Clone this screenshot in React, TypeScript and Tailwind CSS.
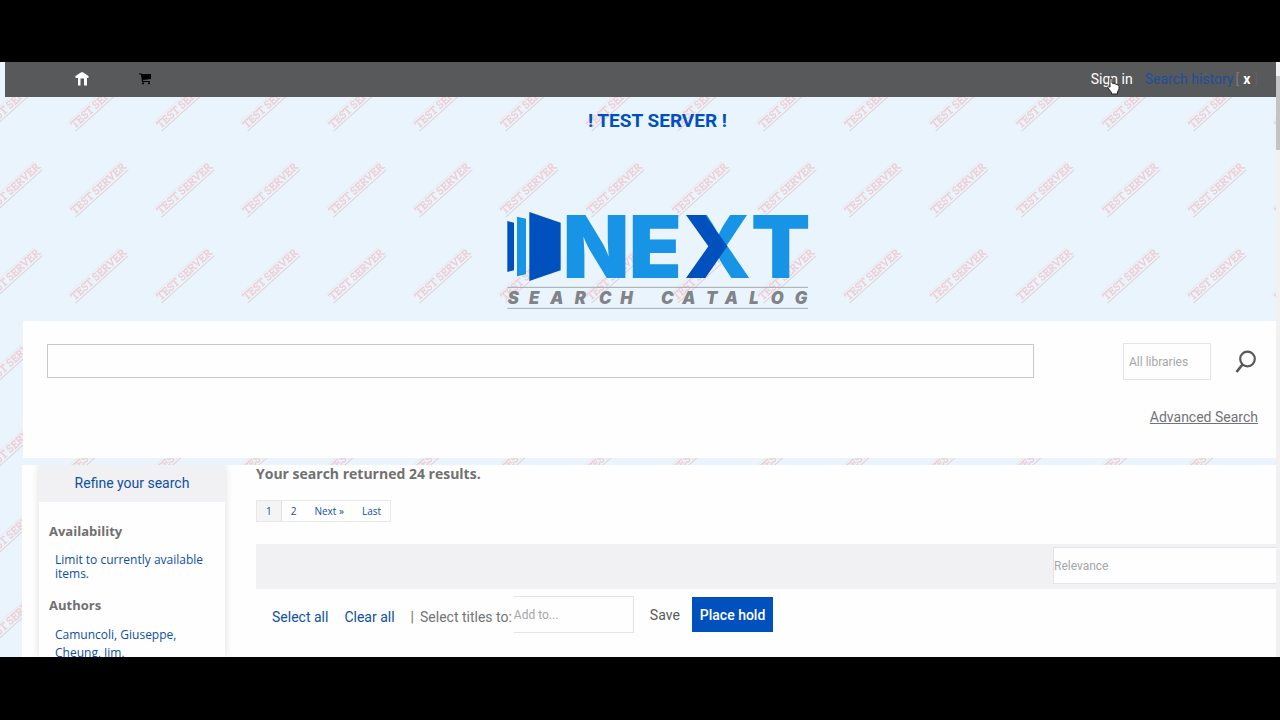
import React from "react";

const roboto = "font-['Roboto',sans-serif]";

function Watermark() {
  return (
    <svg aria-hidden="true" className="pointer-events-none absolute inset-0 h-full w-full">
      <defs>
        <pattern id="stamp" x="-20" y="3" width="86" height="86" patternUnits="userSpaceOnUse">
          <g transform="translate(10 65) rotate(-42)">
            <text
              x="0"
              y="-2"
              fontFamily="Liberation Serif, serif"
              fontSize="11"
              fill="#f3dde4"
              stroke="#ecc9d1"
              strokeWidth="0.5"
            >
              TEST SERVER
            </text>
            <path d="M-1 0.5H70" stroke="#e2d0d8" strokeWidth="1" />
            <path d="M-1 -11H69" stroke="#ecdfe6" strokeWidth="0.7" />
          </g>
        </pattern>
      </defs>
      <rect width="100%" height="100%" fill="url(#stamp)" />
    </svg>
  );
}

function HomeIcon() {
  return (
    <svg width="14" height="14" viewBox="0 0 14 14" fill="#fff" aria-hidden="true">
      <path d="M7 0 L9 1 L13.5 4 V6 H12 V13.5 H9 V6.5 H5.5 V13.5 H3 V6 H0.5 V4 L5 1Z" />
    </svg>
  );
}

function CartIcon() {
  return (
    <svg width="13" height="12" viewBox="0 0 13 12" fill="#000" aria-hidden="true">
      <path d="M0 0.5H2.5L3 1H12V6L4 7V8H11V9H3L2 1.5H0Z" />
      <circle cx="4" cy="10.3" r="1.1" />
      <circle cx="10" cy="10.3" r="1.1" />
    </svg>
  );
}

function HandCursor() {
  return (
    <svg
      width="13"
      height="18"
      viewBox="0 0 13 18"
      aria-hidden="true"
      className="pointer-events-none absolute left-4 top-2"
    >
      <path
        d="M3 1.5Q4 .5 5 1.5V6L6 6.2L8 6.8L10 7.5Q12 8 12 9.5V12L10.5 15V17H4.5V15.5L1 11Q.2 9.5 1.5 9.2L3 10.2Z"
        fill="#fff"
        stroke="#222"
        strokeWidth="1"
      />
    </svg>
  );
}

function Logo() {
  return (
    <svg width="302" height="99" viewBox="81 363 906 297" role="img" aria-label="NEXT Search Catalog">
      <path d="M82 393L102 398V541L82 546Z" fill="#0050bd" />
      <path d="M111 380L138 386V553L111 559Z" fill="#1794e6" />
      <path d="M148 366L242 398V541L148 573Z" fill="#0050bd" />
      <text y="564" fontFamily="Inter, sans-serif" fontWeight="900" fontSize="260" fill="#1794e6">
        <tspan x="248 446">NE</tspan>
        <tspan x="616" fontWeight="800">X</tspan>
        <tspan x="813">T</tspan>
      </text>
      <path d="M618 375H676L742 469L676 564H618L685 469Z" fill="#0050bd" />
      <path d="M82 592H984M82 655H984" stroke="#a5a9ad" strokeWidth="3" />
      <text
        x="83 147 211 284 357 421 503 543 607 678 734 808 872 944"
        y="642"
        fontFamily="Inter, sans-serif"
        fontWeight="900"
        fontStyle="italic"
        fontSize="50"
        fill="#808388"
      >
        SEARCH CATALOG
      </text>
    </svg>
  );
}

function TopBar() {
  return (
    <header className={`ml-[5px] flex h-[35px] items-center bg-[#58595b] pb-[2px] text-sm ${roboto}`}>
      <nav aria-label="Shortcuts" className="flex items-center gap-[50px] pl-[70px]">
        <a href="#home" aria-label="Home"><HomeIcon /></a>
        <a href="#cart" aria-label="Cart"><CartIcon /></a>
      </nav>
      <div className="ml-auto flex items-center pr-[18px]">
        <a href="#signin" className="relative mr-3 text-white">
          Sign in
          <HandCursor />
        </a>
        <a href="#history" className="text-[#1b509c]">Search history</a>
        <span className="ml-0.5 flex gap-1 text-[#85777b]">
          [
          <a href="#clear" aria-label="Clear search history" className="font-bold text-white">x</a>
          <span className="text-[#70595d]">]</span>
        </span>
      </div>
    </header>
  );
}

function SearchArea() {
  return (
    <form className={`ml-[23px] h-[137px] bg-[#fefefe] pl-6 pr-[18px] pt-[22px] ${roboto}`}>
      <div className="flex items-start">
        <input
          type="text"
          aria-label="Search the catalog"
          className="mt-px h-[34px] min-w-0 flex-1 border border-[#c8c8cb] bg-[#fefefe] px-2 outline-none"
        />
        <select
          aria-label="Library"
          className="ml-[89px] h-[37px] w-[88px] appearance-none rounded-none border border-[#e4e4e8] bg-[#fefefe] px-[5px] text-xs text-[#a5a6a9]"
        >
          <option>All libraries</option>
        </select>
        <button type="button" aria-label="Search" className="mt-[7px] ml-6 mr-px">
          <svg width="22" height="24" viewBox="0 0 22 24" fill="none" stroke="#58595b" strokeWidth="2.2">
            <circle cx="12.5" cy="9" r="7.3" />
            <path d="M7.5 14.5L1.5 22" strokeWidth="2.8" />
          </svg>
        </button>
      </div>
      <div className="mt-[25px] text-right">
        <a href="#advanced" className="text-sm text-[#727377] underline">Advanced Search</a>
      </div>
    </form>
  );
}

function Facets() {
  return (
    <aside className="w-[186px] shrink-0 bg-[#fefefe] text-xs text-[#0f4fa5] shadow-[0_0_8px_rgba(0,0,30,0.13)]">
      <h2 className={`flex h-[37px] items-center justify-center bg-[#f1f1f4] pb-px text-sm ${roboto}`}>
        <a href="#refine">Refine your search</a>
      </h2>
      <div className="px-[10px] pt-5">
        <h3 className="text-[13px] leading-[18px] font-bold text-[#707070]">Availability</h3>
        <ul className="px-[6px] pt-[13px]">
          <li className="leading-[14px]"><a href="#available">Limit to currently available items.</a></li>
        </ul>
        <h3 className="pt-[15px] text-[13px] leading-[18px] font-bold text-[#707070]">Authors</h3>
        <ul className="px-[6px] pt-3 leading-[18px]">
          <li><a href="#camuncoli">Camuncoli, Giuseppe,</a></li>
          <li><a href="#cheung">Cheung, Jim,</a></li>
        </ul>
      </div>
    </aside>
  );
}

function Pagination() {
  return (
    <nav aria-label="Pages" className="mt-[18px] flex w-fit border border-[#e8e8ea] text-[10px] leading-5 text-[#0f4fa5]">
      <a href="#p1" aria-current="page" className="border-r border-[#e0e0e2] bg-[#f4f4f4] px-[9px]">1</a>
      <a href="#p2" className="px-[9px]">2</a>
      <a href="#next" className="px-[9px]">Next »</a>
      <a href="#last" className="px-[9px]">Last</a>
    </nav>
  );
}

function Results() {
  return (
    <section className="min-w-0 flex-1">
      <h1 className="text-sm leading-[17px] font-bold text-[#707070]">Your search returned 24 results.</h1>
      <Pagination />
      <div className={`mt-[22px] flex h-[45px] items-start justify-end bg-[#f1f1f4] pt-[3px] ${roboto}`}>
        <select
          aria-label="Sort by"
          className="h-[37px] w-[223px] appearance-none rounded-none border border-r-0 border-[#e4e4e8] bg-[#fefefe] text-xs text-[#a5a6a9]"
        >
          <option>Relevance</option>
        </select>
      </div>
      <div className={`flex items-center pl-4 pt-[7px] text-sm whitespace-nowrap text-[#727377] ${roboto}`}>
        <div className="flex pt-1">
          <a href="#all" className="text-[#0f4fa5]">Select all</a>
          <a href="#none" className="ml-4 text-[#0f4fa5]">Clear all</a>
          <span className="ml-4">|</span>
          <label htmlFor="add-to" className="ml-[6px]">Select titles to:</label>
        </div>
        <select
          id="add-to"
          className="ml-0.5 h-[37px] w-[120px] appearance-none rounded-none border border-l-0 border-[#e4e4e8] bg-[#fefefe] text-xs text-[#a5a6a9]"
        >
          <option>Add to...</option>
        </select>
        <button type="button" className="ml-4 text-[#58595b]">Save</button>
        <button type="button" className="ml-3 h-[35px] bg-[#0050bd] px-2 font-medium text-white">
          Place hold
        </button>
      </div>
    </section>
  );
}

export default function App() {
  return (
    <div className="h-screen bg-black pt-[62px] pb-[63px] font-['Open_Sans','Noto_Sans',sans-serif]">
      <div className="flex h-full overflow-hidden bg-[#eaf4fc]">
        <div className="relative min-w-0 flex-1 overflow-hidden">
          <Watermark />
          <div className="relative flex h-full flex-col">
            <TopBar />
            <div className="flex flex-col items-center pt-[10px] pl-[39px]">
              <p className={`text-[19px] leading-7 font-bold text-[#0050bd] ${roboto}`}>! TEST SERVER !</p>
              <a href="#catalog" className="mt-[76px] mb-[11px] block">
                <Logo />
              </a>
            </div>
            <SearchArea />
            <main className="mt-[7px] ml-[22px] flex min-h-0 flex-1 gap-[31px] overflow-hidden bg-[#fefefe] pl-[17px]">
              <Facets />
              <Results />
            </main>
          </div>
        </div>
        <div aria-hidden="true" className="w-1 shrink-0 bg-[#f1f1f4] pt-[14px]">
          <div className="h-[74px] bg-[#c3c3c5]" />
        </div>
      </div>
    </div>
  );
}
